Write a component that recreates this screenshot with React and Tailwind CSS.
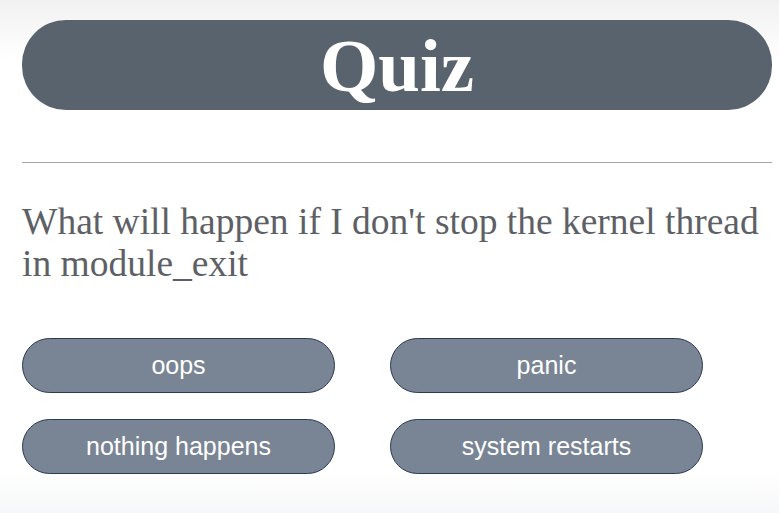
import React from "react";

const answers = ["oops", "panic", "nothing happens", "system restarts"];

export default function App() {
  return (
    <div className="min-h-[513px] w-full bg-[linear-gradient(to_bottom,#f1f1f1_0px,#ffffff_60px,#ffffff_470px,#f6f7f8_513px)]">
      <div className="pl-[22px] pr-[7px] pt-[20px]">
        {/* Title bar */}
        <div className="flex h-[90px] items-center justify-center rounded-[44px] bg-[#59636d]">
          <h1 className="text-[75px] font-bold leading-none text-white font-[family-name:'Liberation_Serif',serif]">
            Quiz
          </h1>
        </div>

        <hr className="mt-[52px] border-t border-[#a3a3a3]" />

        {/* Question */}
        <p className="mt-[38px] text-[37.5px] leading-[42px] text-[#5d6065] font-[family-name:'Liberation_Serif',serif]">
          What will happen if I don't stop the kernel thread in module_exit
        </p>

        {/* Answers */}
        <div className="mt-[53px] grid w-[680px] grid-cols-[313px_313px] gap-x-[55px] gap-y-[26px]">
          {answers.map((a) => (
            <button
              key={a}
              className="h-[55px] rounded-full border border-[#2b3a55] bg-[#798594] text-[25px] text-white font-[family-name:'Liberation_Sans',Arial,sans-serif]"
            >
              {a}
            </button>
          ))}
        </div>
      </div>
    </div>
  );
}
